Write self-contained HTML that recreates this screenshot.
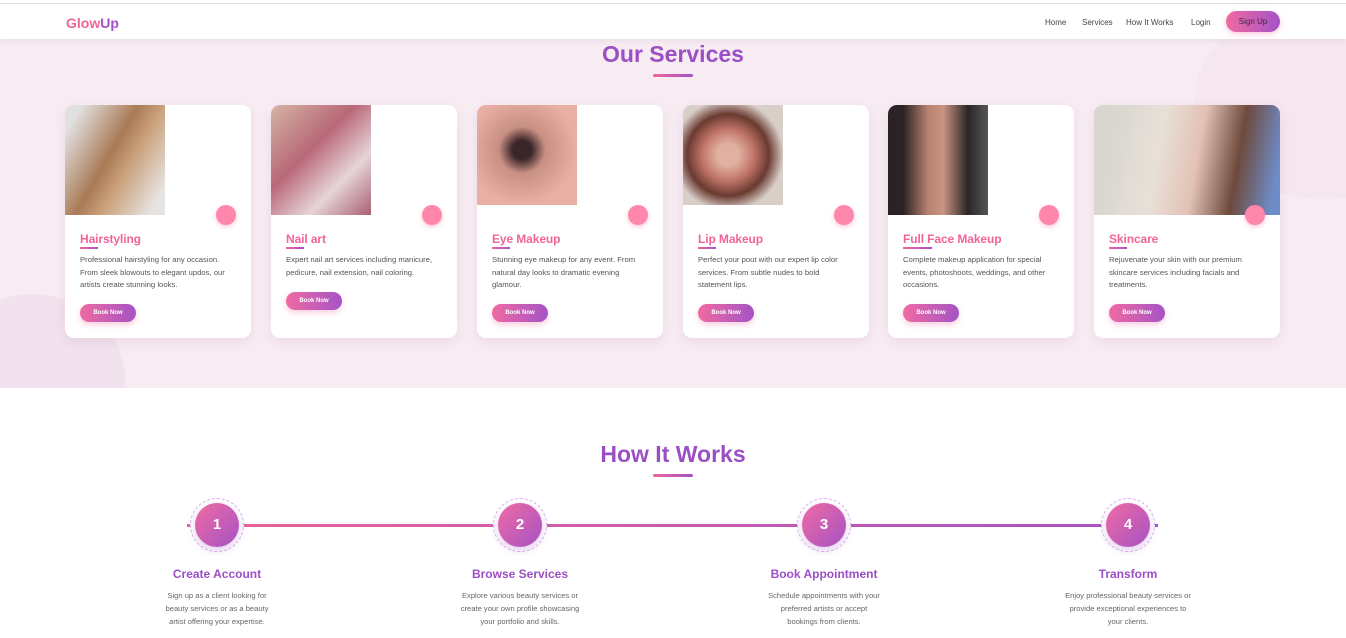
<!DOCTYPE html>
<html><head><meta charset="utf-8">
<style>
*{margin:0;padding:0;box-sizing:border-box}
body{width:1346px;height:638px;overflow:hidden;background:#fff;font-family:"Liberation Sans",sans-serif;position:relative}
.topline{position:absolute;left:0;top:0;width:100%;height:4px;background:#fff;border-bottom:1px solid #e2e2e2}
header{position:absolute;left:0;top:4px;width:100%;height:35px;background:#fff;box-shadow:0 2px 6px rgba(0,0,0,.06);z-index:5}
.logo{position:absolute;left:66px;top:11px;font-size:14px;font-weight:bold;color:#f0649a}
.logo span{color:#a24fc6}
nav{position:absolute;top:14px;left:1045px;font-size:8px;color:#444}
nav a{position:absolute;white-space:nowrap}
.signup{position:absolute;left:1226px;top:7px;width:54px;height:21px;border-radius:11px;background:linear-gradient(90deg,#f06aa2,#a553c5);font-size:8px;color:#3a2a3a;text-align:center;line-height:21px;box-shadow:0 2px 6px rgba(240,100,160,.35)}
.svc{position:absolute;left:0;top:39px;width:100%;height:349px;background:#f8ecf3;overflow:hidden}
.blob1{position:absolute;left:-60px;top:255px;width:185px;height:170px;border-radius:50%;background:#f2e2ee}
.blob2{position:absolute;left:1195px;top:-40px;width:260px;height:200px;border-radius:50%;background:#f6e6ef}
h2{position:absolute;width:100%;text-align:center;font-size:23px;font-weight:bold;color:#9b4fc4}
.ul{position:absolute;left:653px;width:40px;height:3px;border-radius:2px;background:linear-gradient(90deg,#ef659f,#a552c6)}
.card{position:absolute;top:105px;width:186px;height:233px;background:#fff;border-radius:9px;box-shadow:0 4px 12px rgba(150,80,120,.12);overflow:hidden}
.img{position:absolute;left:0;top:0;width:100px;height:110px}
.dot{position:absolute;left:151px;top:100px;width:20px;height:20px;border-radius:50%;background:#ff87ab;box-shadow:0 2px 5px rgba(255,100,150,.35)}
.card h3{position:absolute;left:15px;top:127px;font-size:12px;font-weight:bold;color:#f0649a;letter-spacing:-.1px}
.card .u{position:absolute;left:15px;top:142px;width:18px;height:2px;background:linear-gradient(90deg,#ef659f,#a552c6)}
.card p{position:absolute;left:15px;top:149px;width:155px;font-size:7.7px;line-height:12.5px;color:#555}
.btn{position:absolute;left:15px;width:56px;height:18px;border-radius:9px;background:linear-gradient(90deg,#f06aa2,#a553c5);color:#fff;font-size:6px;font-weight:bold;text-align:center;line-height:18px;box-shadow:0 3px 6px rgba(240,100,160,.3)}
.line{position:absolute;left:187px;top:524px;width:971px;height:3px;background:linear-gradient(90deg,#ec6397,#a552c6)}
.step{position:absolute;top:500px;width:200px;margin-left:-100px;text-align:center}
.ring{position:absolute;left:73px;top:-2px;width:54px;height:54px;border-radius:50%;border:1px dashed #d9b3ec;background:#fff}
.num{position:absolute;left:78px;top:3px;width:44px;height:44px;border-radius:50%;background:linear-gradient(135deg,#f06aa2,#a553c5);color:#fff;font-weight:bold;font-size:15px;line-height:44px;box-shadow:0 3px 8px rgba(160,80,190,.3)}
.step h4{position:absolute;top:67px;width:200px;font-size:12px;color:#9b4fc4;font-weight:bold}
.step p{position:absolute;top:89px;left:35px;width:130px;font-size:7.6px;line-height:13px;color:#666}
</style></head><body>
<div class="topline"></div>
<header>
<div class="logo">Glow<span>Up</span></div>
<nav><a style="left:0">Home</a><a style="left:37px">Services</a><a style="left:81px">How It Works</a><a style="left:146px">Login</a></nav>
<div class="signup">Sign Up</div>
</header>
<div class="svc"><div class="blob1"></div><div class="blob2"></div></div>
<h2 style="top:41px">Our Services</h2>
<div class="ul" style="top:74px"></div>

<div class="card" style="left:65px"><div class="img" style="background:linear-gradient(120deg,#e0e0e0 10%,#a97a55 45%,#c9a07a 60%,#e6e3e0 90%)"></div><div class="dot"></div><h3>Hairstyling</h3><div class="u"></div><p>Professional hairstyling for any occasion. From sleek blowouts to elegant updos, our artists create stunning looks.</p><div class="btn" style="top:199px">Book Now</div></div>

<div class="card" style="left:271px"><div class="img" style="background:linear-gradient(135deg,#d6b4a5,#b86878 40%,#e6d4d8 70%,#a86070)"></div><div class="dot"></div><h3>Nail art</h3><div class="u"></div><p>Expert nail art services including manicure, pedicure, nail extension, nail coloring.</p><div class="btn" style="top:187px">Book Now</div></div>

<div class="card" style="left:477px"><div class="img" style="height:100px;background:radial-gradient(circle at 45% 45%,#3a2528 12%,#c88f83 30%,#e8b0a3 70%)"></div><div class="dot"></div><h3>Eye Makeup</h3><div class="u"></div><p>Stunning eye makeup for any event. From natural day looks to dramatic evening glamour.</p><div class="btn" style="top:199px">Book Now</div></div>

<div class="card" style="left:683px"><div class="img" style="height:100px;background:radial-gradient(circle at 45% 50%,#e0b0a0 15%,#c07468 35%,#6a3a30 55%,#d9cfc9 75%)"></div><div class="dot"></div><h3>Lip Makeup</h3><div class="u"></div><p>Perfect your pout with our expert lip color services. From subtle nudes to bold statement lips.</p><div class="btn" style="top:199px">Book Now</div></div>

<div class="card" style="left:888px"><div class="img" style="background:linear-gradient(90deg,#2a2224 15%,#b88270 40%,#c99484 55%,#2c2628 80%,#555 100%)"></div><div class="dot"></div><h3>Full Face Makeup</h3><div class="u" style="width:29px"></div><p>Complete makeup application for special events, photoshoots, weddings, and other occasions.</p><div class="btn" style="top:199px">Book Now</div></div>

<div class="card" style="left:1094px"><div class="img" style="width:186px;background:linear-gradient(100deg,#d8d6cf 10%,#e8e0d8 35%,#e2c2b5 55%,#6e4a3c 75%,#6e8cc8 95%)"></div><div class="dot"></div><h3>Skincare</h3><div class="u"></div><p>Rejuvenate your skin with our premium skincare services including facials and treatments.</p><div class="btn" style="top:199px">Book Now</div></div>

<h2 style="top:441px">How It Works</h2>
<div class="ul" style="top:474px"></div>
<div class="line"></div>
<div class="step" style="left:217px"><div class="ring"></div><div class="num">1</div><h4>Create Account</h4><p style="left:45px;width:110px">Sign up as a client looking for beauty services or as a beauty artist offering your expertise.</p></div>
<div class="step" style="left:520px"><div class="ring"></div><div class="num">2</div><h4>Browse Services</h4><p>Explore various beauty services or create your own profile showcasing your portfolio and skills.</p></div>
<div class="step" style="left:824px"><div class="ring"></div><div class="num">3</div><h4>Book Appointment</h4><p style="left:42px;width:116px">Schedule appointments with your preferred artists or accept bookings from clients.</p></div>
<div class="step" style="left:1128px"><div class="ring"></div><div class="num">4</div><h4>Transform</h4><p>Enjoy professional beauty services or provide exceptional experiences to your clients.</p></div>
</body></html>
